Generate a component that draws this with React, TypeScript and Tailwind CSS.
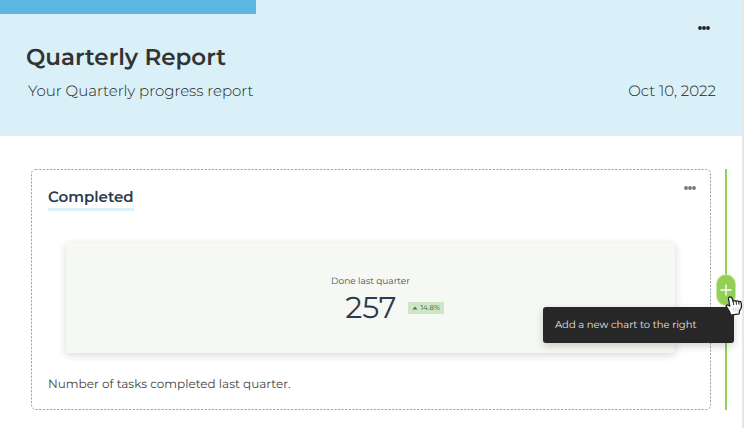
function Dots({ className }: { className: string }) {
  return (
    <svg viewBox="0 0 12 4" className={`h-1 w-3 ${className}`} fill="currentColor" aria-hidden="true">
      <circle cx="2" cy="2" r="1.9" />
      <circle cx="6" cy="2" r="1.9" />
      <circle cx="10" cy="2" r="1.9" />
    </svg>
  );
}

function ReportHeader() {
  return (
    <header className="h-[136px] bg-[#d9f0f8]">
      <div className="h-[14px] w-64 bg-[#5bb7df]" />
      <div className="flex h-7 items-center justify-end pr-8">
        <button type="button" aria-label="Report options" className="flex">
          <Dots className="text-[#222]" />
        </button>
      </div>
      <h1 className="pl-[26px] text-[23px] leading-[30px] font-semibold text-[#333]">Quarterly Report</h1>
      <div className="flex justify-between pt-[7px] pr-[26px] pl-7 text-[15px] leading-6 font-light text-[#222]">
        <p>Your Quarterly progress report</p>
        <p>Oct 10, 2022</p>
      </div>
    </header>
  );
}

function ChartCard() {
  return (
    <section className="relative h-[241px] min-w-0 flex-1">
      <svg className="absolute inset-0 h-full w-full overflow-visible" aria-hidden="true">
        <rect x="0.5" y="0.5" width="100%" height="240" rx="4" fill="none" stroke="#a3a3a3" strokeDasharray="2.2 1.4" />
      </svg>
      <div className="relative px-[17px] pt-[17px]">
        <div className="flex items-start justify-between">
          <h2 className="border-b-[3px] border-[#d9f1f9] text-[15px] leading-[22px] font-semibold text-[#2b3a50]">
            Completed
          </h2>
          <button type="button" aria-label="Chart options" className="mr-[-3px] flex">
            <Dots className="text-[#777]" />
          </button>
        </div>
        <div className="mx-[18px] mt-8 flex h-[110px] flex-col items-center rounded-[3px] bg-[#f6f8f3] pt-[33px] shadow-[0_2px_8px_rgba(0,0,0,0.16)]">
          <p className="text-[9px] leading-3 text-[#405060]">Done last quarter</p>
          <div className="ml-12 flex items-center gap-3 pt-[3px]">
            <p className="text-[30px] leading-[34px] text-[#2b3a50]">257</p>
            <span className="flex h-3 items-center gap-[2px] rounded-[1px] bg-[#cfe5c5] px-1 text-[7px] leading-3 font-medium text-[#547b4d]">
              <svg viewBox="0 0 6 4" className="h-1 w-[6px]" fill="#47803d" aria-hidden="true">
                <path d="M3 0.5 5.5 3.5h-5Z" />
              </svg>
              14.8%
            </span>
          </div>
        </div>
        <p className="pt-[21px] text-[12px] leading-[22px] text-[#444]">Number of tasks completed last quarter.</p>
      </div>
    </section>
  );
}

function HandCursor() {
  return (
    <svg viewBox="0 0 18 21" className="absolute top-[127px] left-0 h-[21px] w-[18px]" aria-hidden="true">
      <path
        d="M5.300 1C4 .8 3.300 1.700 3.500 3L4.800 10 3.300 9.200C1.900 8.500.9 9.600 1.600 10.900L4.600 15.800 5.600 19.200 14.200 17.800 14.500 15C16.100 13 16.700 11.500 16.500 9.500L16.100 6.700C15.900 5.300 14.300 5.100 13.800 6 13.200 4.700 11.600 4.600 11.100 5.500 10.400 4.300 8.900 4.300 8.100 5.200L7.200 2.400C6.900 1.600 6.300 1.100 5.300 1Z"
        fill="#fff"
        stroke="#222"
        strokeWidth="1.3"
        strokeLinejoin="round"
      />
      <path d="m8.100 5.400.5 3.200M11.100 5.700l.4 2.600M13.800 6.200l.3 2.100" stroke="#222" strokeWidth="1" strokeLinecap="round" />
      <path d="m8.500 12.500.3 3M10.700 12.200l.3 3M12.900 11.900l.2 3" stroke="#bbb" strokeWidth=".7" strokeLinecap="round" />
    </svg>
  );
}

function AddChartRail() {
  return (
    <div className="relative h-[241px] w-[2px] shrink-0 bg-[#91cf55]">
      <button
        type="button"
        aria-describedby="add-chart-tip"
        aria-label="Add chart"
        className="absolute top-[106px] left-[-8px] flex h-[30px] w-[18px] items-center justify-center rounded-full bg-[#91cf55] shadow-[0_0_0_1px_#c8e6ac]"
      >
        <svg viewBox="0 0 12 12" className="h-3 w-3" stroke="#fff" strokeWidth="1.4" aria-hidden="true">
          <path d="M6 .5v11M.5 6h11" />
        </svg>
      </button>
      <div
        id="add-chart-tip"
        role="tooltip"
        className="absolute top-[138px] right-[-7px] flex h-9 w-[191px] items-center rounded-[3px] bg-[#272727] pl-3 text-[10px] leading-4 whitespace-nowrap text-[#e5e5e5] shadow-[0_3px_9px_rgba(0,0,0,0.18)]"
      >
        Add a new chart to the right
      </div>
      <HandCursor />
    </div>
  );
}

export default function App() {
  return (
    <div className="min-h-screen bg-white pr-[6px] font-['Montserrat','Inter',sans-serif] [text-rendering:geometricPrecision]">
      <main className="min-h-screen border-r-2 border-[#e6e6e6]">
        <ReportHeader />
        <div className="flex gap-[15px] pt-[33px] pr-[15px] pl-[31px]">
          <ChartCard />
          <AddChartRail />
        </div>
      </main>
    </div>
  );
}
